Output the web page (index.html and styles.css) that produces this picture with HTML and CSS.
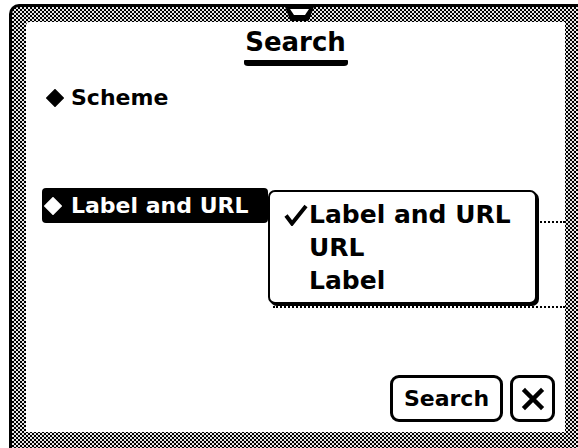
FILE: index.html
```html
<!DOCTYPE html>
<html lang="en">

<head>
    <meta charset="UTF-8">
    <meta name="viewport" content="width=device-width, initial-scale=1.0">
    <title>Search</title>
    <link rel="stylesheet" href="styles.css">
</head>

<body>
    <div class="window">
        <svg class="notch" width="36" height="18" viewBox="0 0 36 18">
            <polygon points="2,0 33,0 27,16 26,17 9,17 8,16" fill="#000" />
            <polygon points="8,5 27,5 23,11 12,11" fill="#fff" />
        </svg>

        <div class="sheet">
            <div class="title">Search</div>
            <div class="title-bar"></div>

            <div class="row scheme">
                <svg class="diamond" width="18" height="18" viewBox="0 0 18 18"><polygon points="9,0.8 17.2,9 9,17.2 0.8,9" fill="#000" stroke="#000" stroke-width="1.6" stroke-linejoin="round" /></svg>
                Scheme
            </div>

            <div class="row scope">
                <div class="picker">
                    <svg class="diamond" width="18" height="18" viewBox="0 0 18 18"><polygon points="9,0.8 17.2,9 9,17.2 0.8,9" fill="#fff" stroke="#fff" stroke-width="1.6" stroke-linejoin="round" /></svg>
                    Label and URL
                </div>
                <div class="field">
                    <div class="line first"></div>
                    <div class="line second"></div>
                </div>
            </div>

            <!-- popup menu of the picker -->
            <div class="popup">
                <div class="item">
                    <span class="mark">
                        <svg width="24" height="22" viewBox="0 0 24 22"><path d="M2 11.5 L8 19.5 L22 2" fill="none" stroke="#000" stroke-width="4" stroke-linejoin="miter" /></svg>
                    </span>Label and URL
                </div>
                <div class="item"><span class="mark"></span>URL</div>
                <div class="item"><span class="mark"></span>Label</div>
            </div>

            <div class="buttons">
                <button class="btn">Search</button>
                <button class="btn close">
                    <svg width="24" height="24" viewBox="0 0 24 24">
                        <path d="M4 4 L20 20 M20 4 L4 20" stroke="#000" stroke-width="4.5" stroke-linecap="square" />
                    </svg>
                </button>
            </div>
        </div>
    </div>
</body>

</html>
```

FILE: styles.css
```css
body {
    margin: 0;
    padding: 0;
    background-color: #ffffff;
    font-family: "DejaVu Sans", sans-serif;
    font-weight: bold;
    color: #000;
    overflow: hidden;
    width: 578px;
    height: 448px;
}

.window {
    position: relative;
    margin: 4px 0 0 9px;
    padding: 15px 30px 30px 14px;
    width: 539px;
    border-top: 3px solid #000;
    border-left: 3px solid #000;
    border-radius: 10px 0 0 0;
    background: repeating-conic-gradient(#000 0 25%, #e6e6e6 0 50%) 0 0 / 4px 4px;
}

.notch {
    position: absolute;
    left: 270px;
    top: -3px;
}

.sheet {
    position: relative;
    display: flex;
    flex-direction: column;
    width: 539px;
    height: 410px;
    background-color: #fff;
    border-radius: 4px 0 0 0;
}

.title {
    margin-top: 5px;
    font-size: 26px;
    line-height: 30px;
    text-align: center;
}

.title-bar {
    align-self: center;
    margin-top: 3px;
    width: 104px;
    height: 6px;
    background-color: #000;
    border-radius: 1px 1px 4px 4px / 1px 1px 3px 3px;
}

.row {
    display: flex;
    align-items: center;
    font-size: 22px;
    line-height: 26px;
}

.scheme {
    margin-top: 19px;
    padding-left: 20px;
}

.diamond {
    margin-right: 7px;
    flex-shrink: 0;
}

.scope {
    margin-top: 77px;
    padding-left: 16px;
    align-items: flex-start;
}

.picker {
    display: flex;
    align-items: center;
    height: 35px;
    padding: 0 20px 0 2px;
    background-color: #000;
    color: #fff;
    border-radius: 4px;
}

.picker .diamond {
    margin-right: 9px;
}

.field {
    flex: 1;
    margin-left: 5px;
}

.line {
    border-bottom: 2px dotted #000;
}

.line.first {
    height: 33px;
}

.line.second {
    height: 83px;
}

.popup {
    position: absolute;
    left: 242px;
    top: 168px;
    width: 227px;
    height: 103px;
    padding: 6px 0 1px 38px;
    border: 2px solid #000;
    border-radius: 7px;
    box-shadow: 2px 2px 0 #000;
    background-color: #fff;
}

.item {
    display: flex;
    align-items: center;
    font-size: 25px;
    line-height: 33px;
    margin-left: -38px;
}

.mark {
    display: flex;
    width: 25px;
    padding-left: 14px;
}

.buttons {
    display: flex;
    gap: 7px;
    margin-top: auto;
    align-self: flex-end;
    padding: 0 10px 10px 0;
}

.btn {
    display: flex;
    align-items: center;
    justify-content: center;
    height: 47px;
    width: 113px;
    padding: 0;
    border: 3px solid #000;
    border-radius: 9px;
    background-color: #fff;
    font-family: "DejaVu Sans", sans-serif;
    font-weight: bold;
    font-size: 22px;
    color: #000;
}

.btn.close {
    width: 45px;
}
```
